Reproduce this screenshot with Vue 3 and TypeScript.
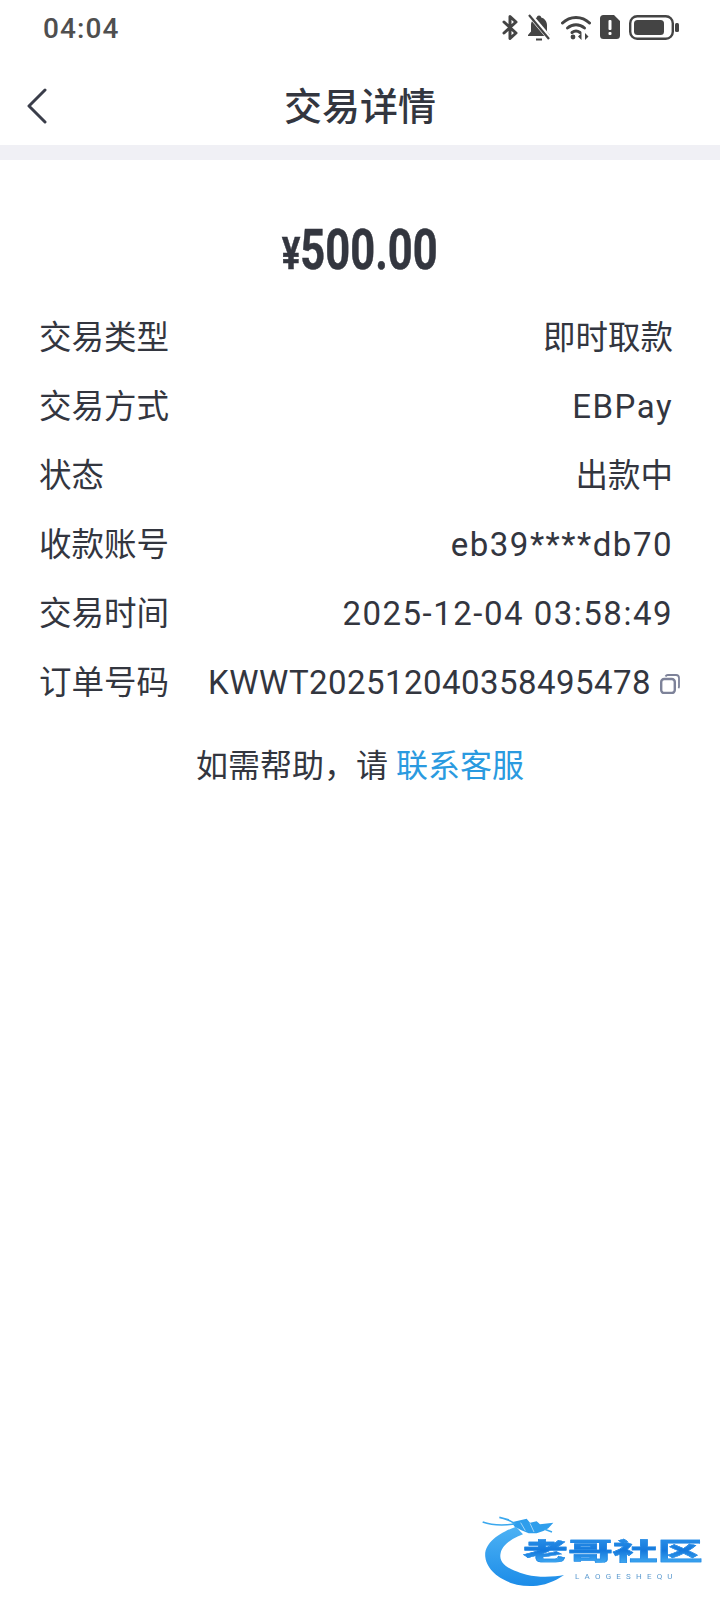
<script setup lang="ts">
type Kind = 'cjk' | 'text' | 'code'

const rows: { label: string; value: string; kind: Kind; copy?: boolean }[] = [
  { label: '交易类型', value: '即时取款', kind: 'cjk' },
  { label: '交易方式', value: 'EBPay', kind: 'text' },
  { label: '状态', value: '出款中', kind: 'cjk' },
  { label: '收款账号', value: 'eb39****db70', kind: 'text' },
  { label: '交易时间', value: '2025-12-04 03:58:49', kind: 'text' },
  { label: '订单号码', value: 'KWWT202512040358495478', kind: 'code', copy: true },
]
</script>

<template>
  <div class="page">
    <div class="status">
      <span class="time">04:04</span>
      <div class="status-icons">
        <svg width="16" height="25" viewBox="0 0 16 25" fill="none" stroke="#444" stroke-width="3" stroke-linejoin="round" stroke-linecap="round"><path d="M2 7l12 11-6 5.500V1.500L14 7 2 18" /></svg>
        <svg class="bell" width="26" height="27" viewBox="0 0 26 27"><path d="M13 1.500c1.300 0 2 .8 2.200 2 3.600 1 5.800 4 5.800 8v6l3 3.500v1H2v-1l3-3.500v-6c0-4 2.200-7 5.800-8 .2-1.200.9-2 2.200-2z" fill="#444" /><path d="M10 25.500h6" stroke="#444" stroke-width="2" /><path d="M3 0l22 26" stroke="#fff" stroke-width="5" /><path d="M3 1l20 24" stroke="#444" stroke-width="2.200" /></svg>
        <svg width="30" height="25" viewBox="0 0 30 25" fill="none" stroke="#444" stroke-width="3" stroke-linecap="round"><path d="M1.500 8C9 .5 21 .5 28.500 8" /><path d="M6.500 13c5-4.500 12-4.500 17 0" /><path d="M11 17.500c2.500-1.800 5.500-1.800 8 0" /><circle cx="12" cy="22" r="2.400" fill="#444" stroke="none" /><path d="M17 21.500l3.500-3.500v7zM27.500 21.500L24 18v7z" fill="#444" stroke="none" /></svg>
        <svg width="20" height="24" viewBox="0 0 20 24"><path d="M3.500 0H14l6 6v14.500a3.500 3.500 0 0 1-3.500 3.500h-13A3.500 3.500 0 0 1 0 20.500v-17A3.500 3.500 0 0 1 3.500 0z" fill="#444" /><rect x="8.500" y="5" width="3" height="10" rx="1" fill="#fff" /><rect x="8.500" y="17" width="3" height="3" rx="1" fill="#fff" /></svg>
        <svg width="50" height="25" viewBox="0 0 50 25"><rect x="1.200" y="1.200" width="42.600" height="22.600" rx="7" fill="none" stroke="#444" stroke-width="2.400" /><rect x="5" y="5" width="30" height="15" rx="3.500" fill="#444" /><rect x="46" y="8" width="4" height="9" rx="1.500" fill="#444" /></svg>
      </div>
    </div>

    <div class="nav">
      <svg class="back" width="20" height="36" viewBox="0 0 20 36" fill="none" stroke="#3a3d4a" stroke-width="3" stroke-linecap="round" stroke-linejoin="round"><path d="M18 2L2 18l16 16" /></svg>
      <h1 class="title">交易详情</h1>
    </div>
    <div class="band"></div>

    <div class="amount"><span class="amount-text"><span class="yen">¥</span>500.00</span></div>

    <div class="list">
      <div v-for="row in rows" :key="row.label" class="row">
        <span class="label">{{ row.label }}</span>
        <span class="value" :class="[row.kind, { 'with-copy': row.copy }]">
          {{ row.value }}
          <svg v-if="row.copy" class="copy" width="20" height="20" viewBox="0 0 20 20" fill="none" stroke="#7d8299" stroke-width="2.400"><path d="M5.500 2.500C6 1.500 6.700 1 7.800 1H16c1.700 0 3 1.300 3 3v8.500c0 .7-.2 1.200-.6 1.600" stroke-width="1.800" /><rect x="1.200" y="5" width="13.600" height="14" rx="3" /></svg>
        </span>
      </div>
    </div>

    <p class="help">如需帮助，请 <a class="link">联系客服</a></p>

    <div class="mark">
      <svg class="dragon" width="120" height="80" viewBox="0 0 360 240">
        <defs><linearGradient id="ring" x1="0" y1="0" x2="0" y2="1"><stop offset="0" stop-color="#4db2f4" /><stop offset="1" stop-color="#1c8ce8" /></linearGradient></defs>
        <path d="M108 50C58 68 10 100 16 142c6 50 74 90 144 86 30-1 65-13 92-33-27 5-72 9-112-1-50-13-86-33-78-65 4-23 32-43 67-56z" fill="url(#ring)" />
        <path d="M98 36l42-10 10 12 20-4 10 9 40-5-15 17-15 8-20 7h-24l-22-9-22-12z" fill="#2f9eec" />
        <path d="M122 38l14 24M150 40l12 26" stroke="#fff" stroke-width="3" fill="none" opacity="0.55" />
        <path d="M8 36c30 11 62 11 97 6M58 22c20 4 37 11 48 20M194 58l22 8" stroke="#3ba8ee" stroke-width="5" fill="none" />
      </svg>
      <div class="mark-name">老哥社区</div>
      <div class="mark-sub">LAOGESHEQU</div>
    </div>
  </div>
</template>

<style scoped>
.page {
  position: relative;
  width: 720px;
  height: 1612px;
  overflow: hidden;
  background: #fff;
  color: #33363f;
  font-family: Roboto, "Noto Sans CJK SC", sans-serif;
}

.status {
  height: 54px;
  padding: 2px 41px 0 43px;
  box-sizing: border-box;
  display: flex;
  align-items: center;
  justify-content: space-between;
}

.time {
  font-size: 28px;
  font-weight: 500;
  color: #4f4f4f;
  letter-spacing: 1.1px;
}

.status-icons {
  display: flex;
  align-items: center;
  gap: 9px;
  margin-top: -2px;
}

.status-icons .bell {
  margin: 0 0 0 -1px;
}

.nav {
  height: 91px;
  padding-top: 14px;
  box-sizing: border-box;
  position: relative;
  display: flex;
  align-items: center;
  justify-content: center;
}

.back {
  position: absolute;
  left: 27px;
  top: 34px;
}

.title {
  margin: 0;
  font-size: 38px;
  font-weight: 500;
  line-height: 48px;
}

.band {
  height: 15px;
  background: #f0f0f5;
}

.amount {
  height: 140px;
  padding-top: 40px;
  box-sizing: border-box;
  display: flex;
  align-items: center;
  justify-content: center;
}

.amount-text {
  display: inline-block;
  font-size: 55px;
  font-weight: 700;
  transform: scaleX(0.79);
  white-space: nowrap;
  -webkit-text-stroke: 0.5px #33363f;
}

.yen {
  font-size: 44px;
}

.list {
  padding: 0 47px 0 39px;
}

.row {
  height: 69px;
  display: flex;
  align-items: center;
  justify-content: space-between;
  font-size: 32.5px;
}

.label {
  white-space: nowrap;
}

.value {
  display: flex;
  align-items: center;
  white-space: nowrap;
}

.value.text {
  margin-top: 5px;
  font-size: 33px;
  letter-spacing: 1.5px;
}

.value.code {
  margin-top: 5px;
  font-size: 33px;
  letter-spacing: 0.45px;
}

.value.with-copy {
  margin-right: -7px;
}

.copy {
  margin: 4px 0 0 9px;
}

.help {
  margin: 28px 0 0;
  text-align: center;
  font-size: 32px;
  line-height: 48px;
}

.link {
  color: #2a9ae0;
}

.mark {
  position: absolute;
  left: 480px;
  top: 1510px;
  width: 232px;
  height: 80px;
  filter: blur(0.7px);
}

.dragon {
  position: absolute;
  left: 0;
  top: 0;
}

.mark-name {
  position: absolute;
  left: 43px;
  top: 28px;
  width: 96px;
  font-size: 24px;
  font-weight: 900;
  line-height: 28px;
  white-space: nowrap;
  background: linear-gradient(#2a90e8, #1478dc 45%, #4ab4f6);
  -webkit-background-clip: text;
  background-clip: text;
  color: transparent;
  -webkit-text-stroke: 0.4px #2288e4;
  transform: scaleX(1.87);
  transform-origin: left center;
}

.mark-sub {
  position: absolute;
  left: 95px;
  top: 62px;
  font-size: 8px;
  line-height: 10px;
  letter-spacing: 5.2px;
  color: #5d9bd0;
  white-space: nowrap;
}
</style>
